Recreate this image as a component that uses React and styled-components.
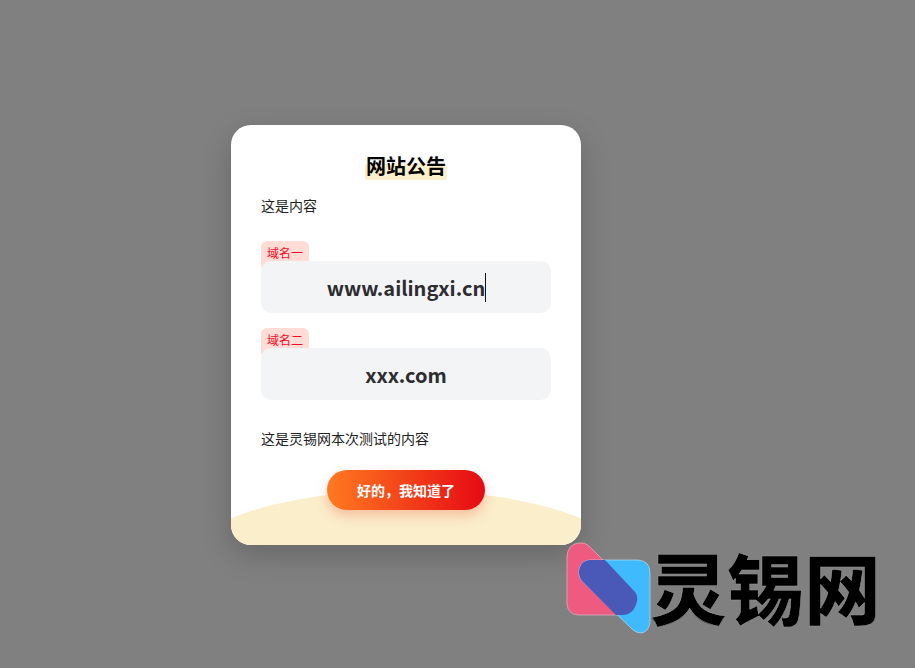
import styled, { createGlobalStyle } from 'styled-components';

const GlobalStyle = createGlobalStyle`
  html, body {
    margin: 0;
    padding: 0;
    height: 100%;
    overflow: hidden;
    background: #808080;
  }
  body {
    font-family: "Noto Sans CJK SC", "Noto Sans", sans-serif;
  }
`;

const Page = styled.div`
  position: relative;
  width: 915px;
  height: 668px;
  box-sizing: border-box;
  padding: 125px 0 0 231px;
`;

const Card = styled.div`
  position: relative;
  width: 350px;
  height: 420px;
  box-sizing: border-box;
  padding: 30px 30px 0;
  background: #fff;
  border-radius: 20px;
  overflow: hidden;
  box-shadow: 0 10px 30px rgba(0, 0, 0, 0.2);
`;

const Title = styled.div`
  display: flex;
  justify-content: center;
  height: 24px;
  margin-bottom: 16px;
`;

const TitleText = styled.h2`
  position: relative;
  z-index: 0;
  margin: 0;
  font-size: 20px;
  line-height: 22px;
  font-weight: 700;
  color: #000;

  &::after {
    content: '';
    position: absolute;
    z-index: -1;
    left: -1px;
    right: -1px;
    top: 9px;
    bottom: -1px;
    background: #fbeecb;
    border-radius: 3px;
  }
`;

const Paragraph = styled.p`
  margin: 0;
  font-size: 14px;
  line-height: 20px;
  color: #222;
`;

const Domains = styled.div`
  display: flex;
  flex-direction: column;
  gap: 15px;
  margin-top: 26px;
  margin-bottom: 28px;
`;

const Domain = styled.div`
  display: flex;
  flex-direction: column;
  align-items: flex-start;
`;

const Tag = styled.span`
  height: 30px;
  box-sizing: border-box;
  padding: 0 6px;
  margin-bottom: -10px;
  background: #ffdcd6;
  border-radius: 6px;
  font-size: 12px;
  line-height: 23px;
  color: #f5091f;
`;

const Field = styled.div`
  position: relative;
  display: flex;
  align-items: center;
  justify-content: center;
  width: 100%;
  height: 52px;
  background: #f3f4f6;
  border-radius: 10px;
  font-size: 20px;
  font-weight: 700;
  color: #2d2d30;
`;

const Caret = styled.i`
  display: inline-block;
  width: 1px;
  height: 29px;
  margin-right: -1px;
  background: #111;
`;

const Footer = styled.div`
  position: relative;
  z-index: 1;
  display: flex;
  justify-content: center;
  margin-top: 22px;
`;

const Confirm = styled.button`
  width: 158px;
  height: 40px;
  padding: 0;
  border: none;
  border-radius: 20px;
  background: linear-gradient(90deg, #ff7a20, #e60913);
  box-shadow: 0 6px 12px rgba(240, 60, 30, 0.25);
  font-family: inherit;
  font-size: 14px;
  font-weight: 700;
  color: #fff;
`;

const Arc = styled.div`
  position: absolute;
  left: -60px;
  right: -60px;
  top: 365px;
  height: 170px;
  background: #fbeecb;
  border-radius: 50%;
`;

const Logo = styled.div`
  position: absolute;
  left: 560px;
  top: 535px;
  display: flex;
  align-items: center;
`;

const LogoName = styled.span`
  margin-left: -10px;
  margin-top: 1px;
  width: 232px;
  font-size: 77px;
  line-height: 100px;
  font-weight: 900;
  color: #000;
  white-space: nowrap;
  -webkit-text-stroke: 0.5px #999;
`;

const LogoMark = () => (
  <svg width="100" height="100" viewBox="0 0 100 100">
    <path
      d="M7 20 Q8 8 19 7 Q25 6 29 10 L76 57 Q80 62 76 69 Q71 79 62 79 L18 79 Q8 78 7 68 Z"
      fill="#ee5a80"
      stroke="#e8c3cf"
      strokeWidth="0.6"
    />
    <path
      d="M30 24 L78 24 Q90 25 90 37 L90 86 Q89 96 81 97 Q76 97 72 93 L22 45 Q17 38 20 31 Q23 24 30 24 Z"
      fill="#3fbafc"
      stroke="#c6e6f8"
      strokeWidth="0.6"
    />
    <path
      d="M30 24 L45 24 L75 56 Q78 60 77 65 Q74 79 62 79 L56 79 L22 45 Q17 38 20 31 Q23 24 30 24 Z"
      fill="#4a58b8"
    />
  </svg>
);

const App = () => {
  return (
    <Page>
      <GlobalStyle />
      <Card>
        <Arc />
        <Title>
          <TitleText>网站公告</TitleText>
        </Title>
        <Paragraph>这是内容</Paragraph>
        <Domains>
          <Domain>
            <Tag>域名一</Tag>
            <Field>
              www.ailingxi.cn
              <Caret />
            </Field>
          </Domain>
          <Domain>
            <Tag>域名二</Tag>
            <Field>xxx.com</Field>
          </Domain>
        </Domains>
        <Paragraph>这是灵锡网本次测试的内容</Paragraph>
        <Footer>
          <Confirm>好的，我知道了</Confirm>
        </Footer>
      </Card>
      <Logo>
        <LogoMark />
        <LogoName>灵锡网</LogoName>
      </Logo>
    </Page>
  );
};

export default App;
